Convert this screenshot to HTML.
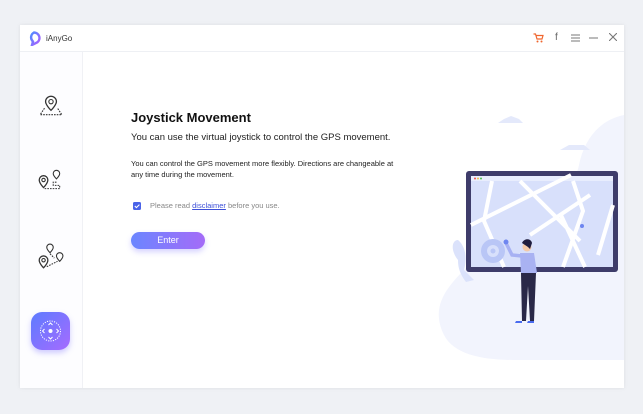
<!DOCTYPE html>
<html><head><style>
*{margin:0;padding:0;box-sizing:border-box}
body{width:643px;height:414px;background:#eff1f5;font-family:"Liberation Sans",sans-serif;position:relative;overflow:hidden}
.win{position:absolute;left:20px;top:25px;width:604px;height:363px;background:#fff;box-shadow:0 0 4px rgba(0,0,0,.08);overflow:hidden}
.tb{position:absolute;left:0;top:0;width:604px;height:27px;border-bottom:1px solid #eef0f4}
.side{position:absolute;left:0;top:27px;width:63px;height:336px;background:#fdfdff;border-right:1px solid #f0f1f5}
.t{position:absolute;white-space:nowrap;color:#222}
</style></head><body>
<div class="win">
 <div class="tb">
  <svg style="position:absolute;left:7px;top:6px" width="14" height="15" viewBox="0 0 14 15"><defs><linearGradient id="lg" x1="0" y1="0" x2="1" y2="1"><stop offset="0" stop-color="#4f8cff"/><stop offset="1" stop-color="#b05cff"/></linearGradient></defs><path d="M7 1.5a5.5 5.5 0 0 1 3.5 9.7L5 14 6 10.5A5.5 5.5 0 0 1 7 1.5z" fill="none" stroke="url(#lg)" stroke-width="2.4"/></svg>
  <div class="t" style="left:26px;top:9px;font-size:8px;color:#333">iAnyGo</div>
  <svg style="position:absolute;left:513px;top:8px" width="11" height="10" viewBox="0 0 11 10"><path d="M0.5 1h2l1.5 5h5l1-3.5H3" fill="none" stroke="#f0662f" stroke-width="1.2"/><circle cx="4.5" cy="8.5" r="1" fill="#f0662f"/><circle cx="8.5" cy="8.5" r="1" fill="#f0662f"/></svg>
  <div class="t" style="left:535px;top:7px;font-size:10px;color:#666">f</div>
  <svg style="position:absolute;left:551px;top:9px" width="9" height="8"><path d="M0 1h9M0 4h9M0 7h9" stroke="#777" stroke-width="1"/></svg>
  <svg style="position:absolute;left:569px;top:12px" width="9" height="2"><path d="M0 1h9" stroke="#777"/></svg>
  <svg style="position:absolute;left:589px;top:8px" width="8" height="8"><path d="M0 0l8 8M8 0L0 8" stroke="#777" stroke-width="1.1"/></svg>
 </div>
 <div class="side">
  <svg style="position:absolute;left:18px;top:43px" width="26" height="22" viewBox="0 0 24 20"><path d="M12 14s-5-5-5-8a5 5 0 0 1 10 0c0 3-5 8-5 8z" fill="#fff" stroke="#333" stroke-width="1.2"/><circle cx="12" cy="6" r="2" fill="none" stroke="#333"/><path d="M6 12l-4 6h20l-4-6" fill="none" stroke="#333" stroke-dasharray="1.5 1"/></svg>
  <svg style="position:absolute;left:16px;top:116px" width="28" height="24" viewBox="0 0 26 22"><path d="M7 18s-4-4-4-7a4 4 0 0 1 8 0c0 3-4 7-4 7z" fill="#fff" stroke="#333" stroke-width="1.2"/><circle cx="7" cy="11" r="1.6" fill="none" stroke="#333"/><path d="M19 10s-3-3-3-5a3 3 0 0 1 6 0c0 2-3 5-3 5z" fill="#fff" stroke="#333"/><path d="M8 19h14v-3h-6v-3h4" fill="none" stroke="#333" stroke-dasharray="1.5 1"/></svg>
  <svg style="position:absolute;left:16px;top:191px" width="28" height="28" viewBox="0 0 26 26"><path d="M7 23s-4-4-4-7a4 4 0 0 1 8 0c0 3-4 7-4 7z" fill="#fff" stroke="#333" stroke-width="1.2"/><circle cx="7" cy="16" r="1.6" fill="none" stroke="#333"/><path d="M13 9s-3-3-3-5a3 3 0 0 1 6 0c0 2-3 5-3 5z" fill="#fff" stroke="#333"/><path d="M22 17s-3-3-3-5a3 3 0 0 1 6 0c0 2-3 5-3 5z" fill="#fff" stroke="#333"/><path d="M13 10l4 4M10 22l10-5" fill="none" stroke="#333" stroke-dasharray="1.5 1"/></svg>
  <div style="position:absolute;left:11px;top:260px;width:39px;height:38px;border-radius:11px;background:linear-gradient(135deg,#5c7bff,#a66bff);box-shadow:0 3px 6px rgba(120,110,255,.35)">
   <svg width="39" height="38" viewBox="0 0 39 38"><circle cx="19.5" cy="19" r="10" fill="none" stroke="#fff" stroke-width="1" stroke-dasharray="1.2 1.2"/><circle cx="19.5" cy="19" r="2" fill="#fff"/><path d="M17.5 13l2-2 2 2M17.5 25l2 2 2-2M13.5 17l-2 2 2 2M25.5 17l2 2-2 2" fill="none" stroke="#fff" stroke-width="1"/></svg>
  </div>
 </div>
 <div class="t" style="left:111px;top:85px;font-size:13px;font-weight:bold;color:#111">Joystick Movement</div>
 <div class="t" style="left:111px;top:107px;font-size:9.5px;color:#222">You can use the virtual joystick to control the GPS movement.</div>
 <div class="t" style="left:111px;top:133px;font-size:7.5px;line-height:11px;color:#222">You can control the GPS movement more flexibly. Directions are changeable at<br>any time during the movement.</div>
 <div style="position:absolute;left:113px;top:177px;width:8px;height:8px;background:#4a63e8;border-radius:1.5px"><svg width="8" height="8" style="display:block"><path d="M1.8 4l1.6 1.6 3-3" fill="none" stroke="#fff" stroke-width="1.1"/></svg></div>
 <div class="t" style="left:130px;top:176px;font-size:7.5px;color:#888">Please read <span style="color:#3c4fd8;text-decoration:underline">disclaimer</span> before you use.</div>
 <div style="position:absolute;left:111px;top:207px;width:74px;height:17px;border-radius:9px;background:linear-gradient(90deg,#6b86ff,#a46bf8);box-shadow:0 3px 6px rgba(120,110,255,.3);color:#fff;font-size:9px;text-align:center;line-height:17px">Enter</div>
 <svg style="position:absolute;left:400px;top:60px" width="204" height="303" viewBox="0 0 204 303">
  <path d="M204 30c-25 5-40 25-45 50-5 25-30 30-55 40-30 15-40 40-55 60-20 20-40 40-25 70 10 20 40 25 70 25h110z" fill="#f2f4fd"/>
  <path d="M78 38h25l-4-4-8-3-7 3z" fill="#e4e9fb"/>
  <path d="M140 65h30l-6-5h-15z" fill="#e4e9fb"/>
  <path d="M82 104h33l-5-5-8-3-10 3z" fill="#e4e9fb"/>
  <path d="M38 175c-8-10-6-20 0-20 6 5 10 15 6 30l10 10-8 2c-6-8-8-14-8-22z" fill="#dbe2fb"/>
  <rect x="46" y="86" width="152" height="101" rx="3" fill="#3e3c6a"/>
  <rect x="51" y="91" width="142" height="91" fill="#d8e0fb"/>
  <rect x="51" y="91" width="142" height="5" fill="#e8edfd"/>
  <circle cx="55" cy="93.5" r="1" fill="#f05050"/><circle cx="58" cy="93.5" r="1" fill="#f0c040"/><circle cx="61" cy="93.5" r="1" fill="#50c050"/>
  <path d="M51 140l100-50M72 96l-8 40 20 46M100 96l60 60M153 96l10 30-20 56M110 150l60-40M140 128l25 54M193 120l-15 50" stroke="#fff" stroke-width="4" fill="none"/>
  <circle cx="73" cy="166" r="12" fill="#b9c6f6"/><circle cx="73" cy="166" r="6" fill="#d8e0fb"/><circle cx="73" cy="166" r="2.5" fill="#b9c6f6"/>
  <circle cx="162" cy="141" r="2" fill="#6e86f0"/>
  <path d="M86 158l6 12 10 1" stroke="#a7b1f3" stroke-width="3.5" fill="none" stroke-linecap="round"/>
  <circle cx="86" cy="157" r="2.5" fill="#6e86f0"/>
  <path d="M100 168h14l3 20h-16z" fill="#a9b2f2"/>
  <circle cx="107" cy="162" r="4.5" fill="#f4c9a8"/><path d="M102 158c2-5 9-5 10 0l-2 6-2-2z" fill="#1f1d3e"/>
  <path d="M101 188h15l-2 48h-4l-2-35-2 35h-4z" fill="#2a2848"/>
  <path d="M96 236h6v2h-7zM108 236h6v2h-7z" fill="#4a6cf0"/>
 </svg>
</div>
</body></html>
